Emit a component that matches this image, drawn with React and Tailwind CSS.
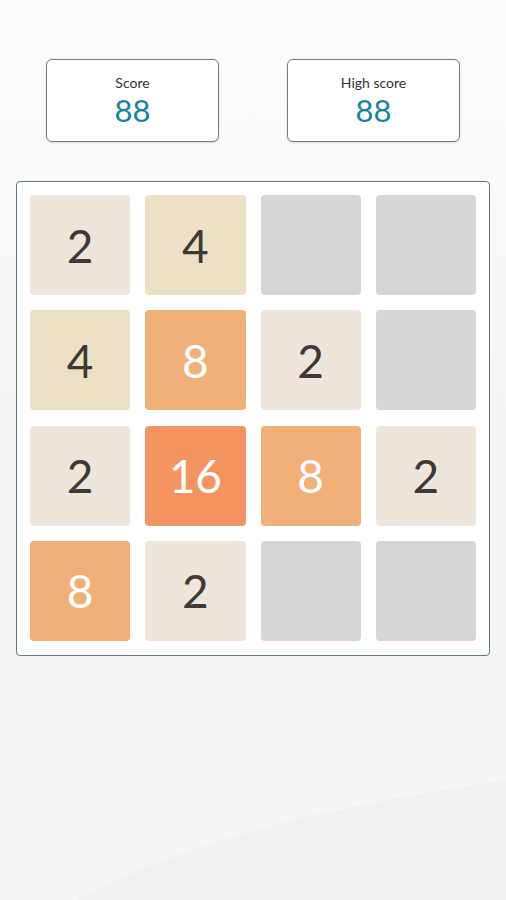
import React from 'react';

const board = [
  [2, 4, 0, 0],
  [4, 8, 2, 0],
  [2, 16, 8, 2],
  [8, 2, 0, 0],
];

const tileStyles = {
  0: 'bg-[#d6d6d6]',
  2: 'bg-[#eee5db] text-[#3d3a35]',
  4: 'bg-[#ece0c7] text-[#3d3a35]',
  8: 'bg-[#f1b078] text-white',
  16: 'bg-[#f39461] text-white',
};

const ScoreBox = ({ label, value }) => (
  <div className="w-[173px] h-[83px] bg-white border border-[#6e7d7d] rounded-[6px] flex flex-col items-center justify-center shadow-sm">
    <div className="text-[14px] text-[#333] leading-none">{label}</div>
    <div className="text-[31px] text-[#17849c] leading-none mt-[5px]">{value}</div>
  </div>
);

const App = () => {
  return (
    <div
      className="relative min-h-screen h-[900px] overflow-hidden bg-gradient-to-b from-[#fcfcfc] via-[#f5f5f5] to-[#f5f5f5]"
      style={{ fontFamily: '"Lato", "Noto Sans", sans-serif' }}
    >
      <svg className="absolute left-0 bottom-0" width="506" height="120" viewBox="0 0 506 120">
        <path d="M60 130 C160 70 300 30 506 0 L506 130 Z" fill="#f0f0f0" />
      </svg>
      <div className="relative pt-[59px] flex flex-col">
        <div className="flex justify-between pl-[46px] pr-[46px]">
          <ScoreBox label="Score" value="88" />
          <ScoreBox label="High score" value="88" />
        </div>
        <div className="mt-[39px] mx-[16px] bg-white border border-[#5f7a7a] rounded-[4px] pt-[13px] pb-[14px] px-[13px]">
          <div className="grid grid-cols-4 gap-x-[15px] gap-y-[15.33px]">
            {board.flat().map((v, i) => (
              <div
                key={i}
                className={`h-[100px] rounded-[4px] flex items-center justify-center text-[46px] font-normal ${tileStyles[v]}`}
              >
                {v ? v : ''}
              </div>
            ))}
          </div>
        </div>
      </div>
    </div>
  );
};

export default App;
